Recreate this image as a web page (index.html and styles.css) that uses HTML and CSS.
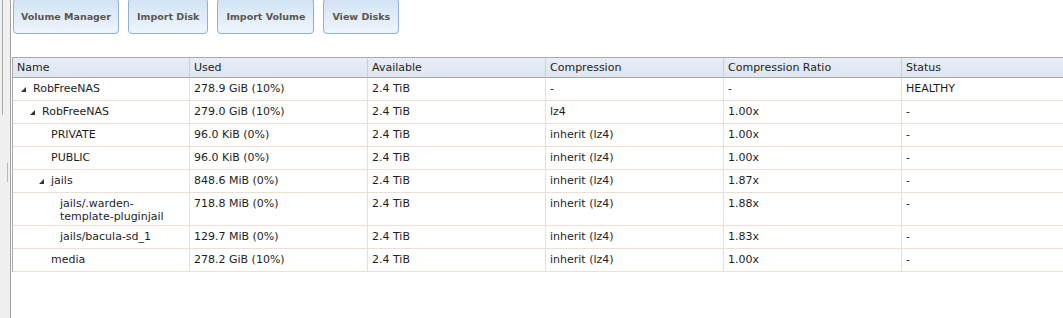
FILE: index.html
```html
<!DOCTYPE html>
<html lang="en">
<head>
<meta charset="UTF-8">
<title>Storage</title>
<link rel="stylesheet" href="styles.css">
</head>
<body>

<div class="splitter">
  <div class="split-line"></div>
  <div class="grip"></div>
</div>

<div class="main">
  <div class="toolbar">
    <button class="btn">Volume Manager</button>
    <button class="btn">Import Disk</button>
    <button class="btn">Import Volume</button>
    <button class="btn">View Disks</button>
  </div>

  <table class="grid">
    <colgroup>
      <col style="width:177px"><col style="width:178px"><col style="width:178px">
      <col style="width:178px"><col style="width:178px"><col style="width:178px">
    </colgroup>
    <thead>
      <tr>
        <th>Name</th><th>Used</th><th>Available</th><th>Compression</th><th>Compression Ratio</th><th>Status</th>
      </tr>
    </thead>
    <tbody>
      <tr>
        <td><div class="name l0"><span class="exp open"></span><span>RobFreeNAS</span></div></td>
        <td>278.9 GiB (10%)</td><td>2.4 TiB</td><td>-</td><td>-</td><td>HEALTHY</td>
      </tr>
      <tr>
        <td><div class="name l1"><span class="exp open"></span><span>RobFreeNAS</span></div></td>
        <td>279.0 GiB (10%)</td><td>2.4 TiB</td><td>lz4</td><td>1.00x</td><td>-</td>
      </tr>
      <tr>
        <td><div class="name l2"><span class="exp"></span><span>PRIVATE</span></div></td>
        <td>96.0 KiB (0%)</td><td>2.4 TiB</td><td>inherit (lz4)</td><td>1.00x</td><td>-</td>
      </tr>
      <tr>
        <td><div class="name l2"><span class="exp"></span><span>PUBLIC</span></div></td>
        <td>96.0 KiB (0%)</td><td>2.4 TiB</td><td>inherit (lz4)</td><td>1.00x</td><td>-</td>
      </tr>
      <tr>
        <td><div class="name l2"><span class="exp open"></span><span>jails</span></div></td>
        <td>848.6 MiB (0%)</td><td>2.4 TiB</td><td>inherit (lz4)</td><td>1.87x</td><td>-</td>
      </tr>
      <tr>
        <td><div class="name l3"><span class="exp"></span><span>jails/.warden-template-pluginjail</span></div></td>
        <td>718.8 MiB (0%)</td><td>2.4 TiB</td><td>inherit (lz4)</td><td>1.88x</td><td>-</td>
      </tr>
      <tr>
        <td><div class="name l3"><span class="exp"></span><span>jails/bacula-sd_1</span></div></td>
        <td>129.7 MiB (0%)</td><td>2.4 TiB</td><td>inherit (lz4)</td><td>1.83x</td><td>-</td>
      </tr>
      <tr>
        <td><div class="name l2"><span class="exp"></span><span>media</span></div></td>
        <td>278.2 GiB (10%)</td><td>2.4 TiB</td><td>inherit (lz4)</td><td>1.00x</td><td>-</td>
      </tr>
    </tbody>
  </table>
</div>

</body>
</html>
```

FILE: styles.css
```css
*{box-sizing:border-box}
body{
  margin:0;
  height:100vh;
  overflow:hidden;
  display:flex;
  font-family:"DejaVu Sans", Verdana, sans-serif;
  font-size:11px;
  color:#1e1e1e;
  background:#fff;
}

/* SPLITTER */
.splitter{
  width:11px;
  flex:none;
  background:#f0f0f0;
  border-right:1px solid #a3a3a3;
  display:flex;
  flex-direction:column;
}
.split-line{
  width:1px;
  height:115px;
  margin-left:2px;
  background:#a8a8a8;
}
.grip{
  width:1px;
  height:19px;
  margin:48px 0 0 7px;
  background:#b8b8b8;
}

/* TOOLBAR */
.main{
  flex:1;
  min-width:0;
}
.toolbar{
  display:flex;
  gap:9px;
  margin-top:-2px;
  padding-left:2px;
}
.btn{
  height:36px;
  padding:0 8px;
  border:1px solid #8fb0d2;
  border-radius:4px;
  background:linear-gradient(#d2e3f5,#eef5fc);
  font-family:"DejaVu Sans", Verdana, sans-serif;
  font-weight:bold;
  font-size:9.5px;
  color:#585552;
}
.btn:first-child{padding:0 7px}

/* GRID */
.grid{
  margin:23px 0 0 1px;
  width:1067px;
  table-layout:fixed;
  border-collapse:separate;
  border-spacing:0;
  border-left:1px solid #a8a8a8;
}
.grid th{
  text-align:left;
  font-weight:normal;
  color:#1e1e1e;
  line-height:13px;
  padding:3px 4px;
  background:linear-gradient(#e9eef5,#dde5ef);
  border-top:1px solid #a9a9a9;
  border-bottom:1px solid #a9a9a9;
  border-right:1px solid #c6ced8;
}
.grid td{
  line-height:13px;
  height:23px;
  padding:4px 4px 2px;
  vertical-align:top;
  border-bottom:1px solid #eedfd0;
  border-right:1px solid #eedfd0;
}

.name{
  display:flex;
  align-items:flex-start;
}
.name.l1{padding-left:9px}
.name.l2{padding-left:18px}
.name.l3{padding-left:27px}
.exp{
  flex:none;
  width:16px;
  height:13px;
  position:relative;
}
.exp.open::after{
  content:"";
  position:absolute;
  left:4px;
  top:5px;
  border-left:5px solid transparent;
  border-bottom:5px solid #333;
}
```
